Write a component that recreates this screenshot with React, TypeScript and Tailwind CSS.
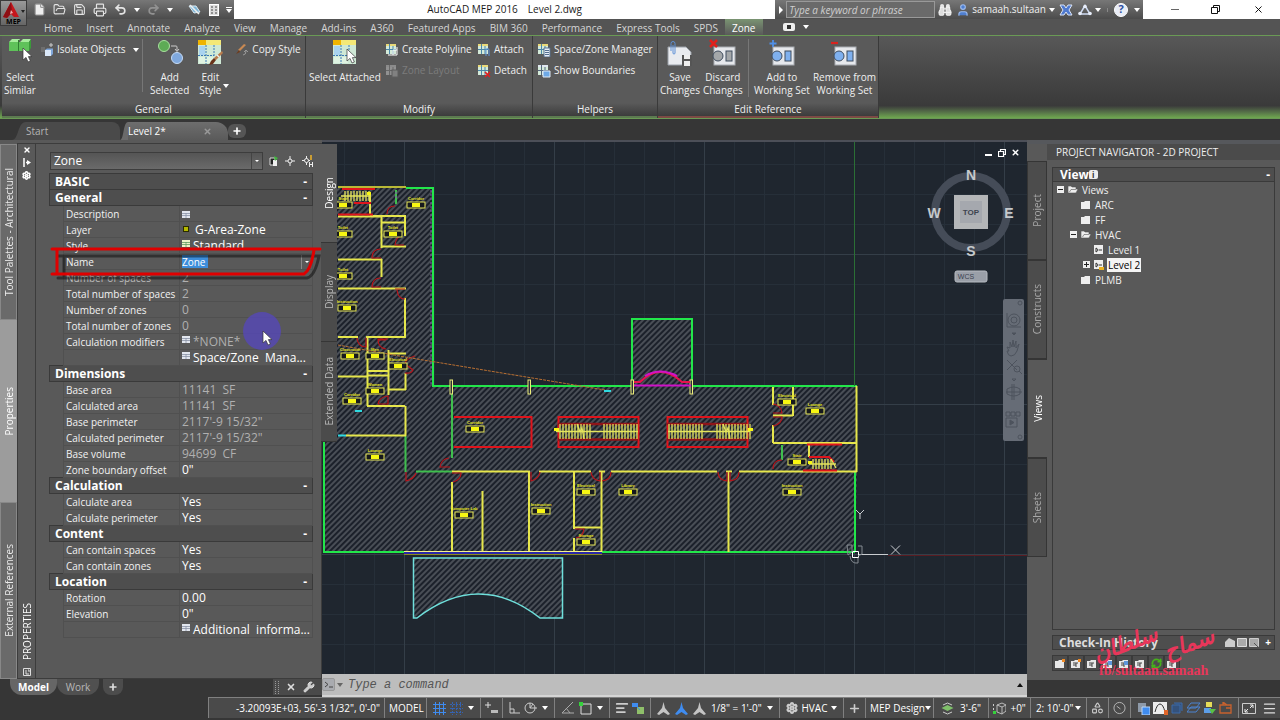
import React, { useState } from 'react';
import { clsx } from 'clsx';
import {
    AlignLeft,
    Binoculars,
    File,
    FolderOpen,
    Menu,
    Plus,
    Printer,
    Redo2,
    RefreshCw,
    Save,
    Settings,
    Shapes,
    Undo2,
    User,
    Wrench,
    X
} from 'lucide-react';

const RIBBON_TABS = [
    'Home', 'Insert', 'Annotate', 'Analyze', 'View', 'Manage', 'Add-ins', 'A360',
    'Featured Apps', 'BIM 360', 'Performance', 'Express Tools', 'SPDS', 'Zone'
];

interface PropertyRow {
    name: string;
    value: string;
    icon?: 'sheet' | 'layer' | 'style';
    muted?: boolean;
    editable?: boolean;
}

interface PropertyGroup {
    title: string;
    rows: PropertyRow[];
}

const GROUPS: PropertyGroup[] = [
    { title: 'BASIC', rows: [] },
    {
        title: 'General',
        rows: [
            { name: 'Description', value: '', icon: 'sheet' },
            { name: 'Layer', value: ' G-Area-Zone', icon: 'layer' },
            { name: 'Style', value: 'Standard', icon: 'style' },
            { name: 'Name', value: 'Zone', editable: true },
            { name: 'Number of spaces', value: '2', muted: true },
            { name: 'Total number of spaces', value: '2', muted: true },
            { name: 'Number of zones', value: '0', muted: true },
            { name: 'Total number of zones', value: '0', muted: true },
            { name: 'Calculation modifiers', value: '*NONE*', icon: 'sheet', muted: true },
            { name: '', value: 'Space/Zone  Mana...', icon: 'sheet' }
        ]
    },
    {
        title: 'Dimensions',
        rows: [
            { name: 'Base area', value: '11141  SF', muted: true },
            { name: 'Calculated area', value: '11141  SF', muted: true },
            { name: 'Base perimeter', value: '2117\'-9 15/32"', muted: true },
            { name: 'Calculated perimeter', value: '2117\'-9 15/32"', muted: true },
            { name: 'Base volume', value: '94699  CF', muted: true },
            { name: 'Zone boundary offset', value: '0"' }
        ]
    },
    {
        title: 'Calculation',
        rows: [
            { name: 'Calculate area', value: 'Yes' },
            { name: 'Calculate perimeter', value: 'Yes' }
        ]
    },
    {
        title: 'Content',
        rows: [
            { name: 'Can contain spaces', value: 'Yes' },
            { name: 'Can contain zones', value: 'Yes' }
        ]
    },
    {
        title: 'Location',
        rows: [
            { name: 'Rotation', value: '0.00' },
            { name: 'Elevation', value: '0"' },
            { name: '', value: 'Additional  informa...', icon: 'sheet' }
        ]
    }
];

const Caret = ({ className = 'text-white' }: { className?: string }) => (
    <svg width="6" height="4" viewBox="0 0 6 4" className={clsx('shrink-0', className)}>
        <path d="M0 0h6L3 4z" fill="currentColor" />
    </svg>
);

/* ---------- ribbon icons ---------- */

const Cursor = ({ x, y }: { x: number; y: number }) => (
    <path
        transform={`translate(${x} ${y})`}
        d="M0 0v12l3-2.6 2 4.6 2.4-1-2-4.4H9z"
        fill="#fff"
        stroke="#333"
        strokeWidth=".7"
    />
);

const SelectSimilarIcon = () => (
    <svg width="28" height="28" viewBox="0 0 28 28">
        <path d="M3 3l3-3h8l-2 3zM14 3l3-3h8l-2 3z" fill="#a5eb9c" />
        <path d="M3 3h9v9H3zM13 3h10v9H13z" fill="#5fc25a" />
        <path d="M23 3l2-3v9l-2 3z" fill="#3b9a3a" />
        <path d="M12.5 1v11" stroke="#2f7f31" />
        <Cursor x={17} y={9} />
    </svg>
);

const AddSelectedIcon = () => (
    <svg width="28" height="28" viewBox="0 0 28 28">
        <circle cx="8" cy="7" r="5.5" fill="#5dab55" stroke="#a9e09f" />
        <circle cx="21" cy="19" r="5.5" fill="#7fa8dd" stroke="#c6dcf7" />
        <path d="M15 7h5q1 0 1 1v4M19 10l2 2.5 2-2.5" fill="none" stroke="#ccc" />
    </svg>
);

const StyleSheetIcon = ({ cursor }: { cursor?: boolean }) => (
    <svg width="28" height="28" viewBox="0 0 28 28">
        <rect x="2" y="1" width="23" height="24" fill="#cfe9d6" />
        <rect x="2" y="1" width="23" height="5" fill="#f4e877" />
        <rect x="2" y="1" width="8" height="5" fill="#f0b400" />
        <rect x="3" y="7" width="6" height="9" fill="#a9d3ef" />
        <rect x="3" y="18" width="14" height="6" fill="#dff3e2" />
        <path d="M10 6v19M2 16.500h16M18 6v12" stroke="#3a78b5" strokeDasharray="2 1" />
        {cursor ? (
            <Cursor x={16} y={10} />
        ) : (
            <>
                <path d="M26 12l-8 7 2 2 7-7z" fill="#b97b4b" />
                <path d="M18 19l2 2-3 4-4 1 2-4z" fill="#6a3319" />
                <path d="M21 16l2 2" stroke="#eee" strokeWidth="1.500" />
            </>
        )}
    </svg>
);

const SaveChangesIcon = () => (
    <svg width="28" height="28" viewBox="0 0 28 28">
        <path d="M2 8h18l5 5v13H2z" fill="#e9ebef" stroke="#9aa0a8" />
        <path d="M5 12V4.500a2 2 0 0 1 4 0V14a1 1 0 0 1-2 0V6" fill="none" stroke="#5c8fd6" />
        <path d="M16 16h10v11H16z" fill="#555" />
        <path d="M18 16h6v4h-6zM18 22h6v5h-6z" fill="#eee" />
    </svg>
);

const ReferenceIcon = ({ kind }: { kind: 'discard' | 'add' | 'remove' }) => (
    <svg width="28" height="28" viewBox="0 0 28 28">
        <rect x="5" y="8" width="21" height="18" fill="#e6e8ec" stroke="#a7abb1" />
        <circle cx="9" cy="17" r="5" fill={kind === 'discard' ? '#a4a7a9' : '#7fb0ee'} stroke="#3f4c5e" />
        <rect x="17" y="12" width="6" height="10" fill={kind === 'discard' ? '#a4a7a9' : '#7fb0ee'} stroke="#3f4c5e" />
        {kind === 'discard' && <path d="M1 1l7 7M8 1L1 8" stroke="#e0201b" strokeWidth="2.500" />}
        {kind === 'add' && <path d="M5 1v7M1.500 4.500h7" stroke="#4f8fe6" strokeWidth="1.800" />}
        {kind === 'remove' && <path d="M1 4h7" stroke="#d8231e" strokeWidth="2.200" />}
    </svg>
);

type SmallKind = 'isolate' | 'brush' | 'polyline' | 'layout' | 'attach' | 'detach' | 'manager' | 'bounds';

const SmallIcon = ({ kind }: { kind: SmallKind }) => {
    if (kind === 'isolate') {
        return (
            <svg width="14" height="14" viewBox="0 0 14 14">
                <path d="M1 4h4v5H1z" fill="#6e6e6e" />
                <path d="M5 7l2-1.500h6V11l-2 2H5z" fill="#7fa6da" />
                <path d="M5 7h6v6H5z" fill="#dbe8f8" />
                <path d="M11 0v4M9 2h4" stroke="#ccc" />
            </svg>
        );
    }
    if (kind === 'brush') {
        return (
            <svg width="14" height="14" viewBox="0 0 14 14">
                <path d="M9 1L3 7l2 1 6-6z" fill="#c98952" />
                <path d="M4 7L1 11l4-2z" fill="#6f3b1c" />
                <path d="M8 12q3 0 3-4M9 9l2-2 2 2" stroke="#999" fill="none" />
            </svg>
        );
    }
    const dim = kind === 'layout';
    return (
        <svg width="14" height="14" viewBox="0 0 14 14" className={clsx(dim && 'opacity-40 grayscale')}>
            <rect x="1" y="1" width="10" height="10" fill="#d4ead9" />
            <rect x="1" y="1" width="10" height="2" fill={kind === 'bounds' ? '#dfe5ef' : '#e9d978'} />
            <path d="M4.500 1v10M1 6.500h10M8 3v8" stroke={kind === 'bounds' ? '#53657d' : '#4b87a8'} />
            {kind === 'polyline' && <path d="M3 12h9V4M8 12V7h4" fill="none" stroke="#fff" />}
            {kind === 'layout' && <rect x="7" y="6" width="6" height="7" fill="#bbb" stroke="#666" />}
            {kind === 'attach' && <path d="M9 13V7a1.500 1.500 0 0 1 3 0v6" fill="none" stroke="#5b93dd" />}
            {kind === 'detach' && <path d="M8 8l5 5M13 8l-5 5" stroke="#e02020" strokeWidth="1.700" />}
            {kind === 'manager' && <path d="M7 5h6v9H7zM8 7.500h4M8 9.500h4M8 11.500h4" fill="#e8eef7" stroke="#54708f" />}
            {kind === 'bounds' && <path d="M6 7h7v6H6z" fill="#6ea9e6" stroke="#dfeaf7" />}
        </svg>
    );
};

/* ---------- ribbon ---------- */

const BigButton = ({ icon, lines, caret }: { icon: React.ReactNode; lines: string[]; caret?: boolean }) => (
    <button type="button" className="flex flex-col items-center gap-1 text-center leading-[13px] whitespace-nowrap">
        {icon}
        <span className="flex flex-col">
            {lines.map((line, i) => (
                <span key={line} className="relative">
                    {line}
                    {caret && i === lines.length - 1 && <span className="absolute top-0 -right-2"><Caret /></span>}
                </span>
            ))}
        </span>
    </button>
);

const SmallButton = ({ kind, label, caret, disabled }: { kind: SmallKind; label: string; caret?: boolean; disabled?: boolean }) => (
    <button type="button" disabled={disabled} className="flex h-[21px] items-center gap-[3px] whitespace-nowrap disabled:text-[#7c7c7c]">
        <SmallIcon kind={kind} />
        {label}
        {caret && <span className="ml-1"><Caret /></span>}
    </button>
);

const Panel = ({ title, className, accent, children }: { title: string; className: string; accent?: boolean; children: React.ReactNode }) => (
    <section className={clsx('flex shrink-0 flex-col border-r border-[#3a3a3a] bg-[#5a5a5a]', className)}>
        <div className="flex flex-1 items-start pt-[3px]">{children}</div>
        <h2
            className={clsx(
                'border-b-2 bg-linear-to-b from-[#5a5a5a] to-[#3c3c3c] text-center text-[10px] leading-[13px]',
                accent ? 'border-[#7c4a44]' : 'border-[#5c7a50]'
            )}
        >
            {title}
        </h2>
    </section>
);

const Ribbon = () => (
    <div className="flex h-[84px] shrink-0 border-y border-[#6a9a55] bg-linear-to-b from-[#585858] via-[#3a3a3a] via-85% to-[#6fa84f] pl-[2px] text-[10px] text-[#f0f0f0]">
        <Panel title="General" className="w-[304px]">
            <div className="w-[38px] pl-[2px]"><BigButton icon={<SelectSimilarIcon />} lines={['Select', 'Similar']} /></div>
            <div className="w-[103px] border-r border-[#777] pb-8"><SmallButton kind="isolate" label="Isolate Objects" caret /></div>
            <div className="flex gap-[5px] pl-[7px]">
                <BigButton icon={<AddSelectedIcon />} lines={['Add', 'Selected']} />
                <div className="w-9 pl-[2px]"><BigButton icon={<StyleSheetIcon />} lines={['Edit', 'Style']} caret /></div>
                <SmallButton kind="brush" label="Copy Style" />
            </div>
        </Panel>
        <Panel title="Modify" className="w-[227px]">
            <div className="w-[79px] pl-[3px]"><BigButton icon={<StyleSheetIcon cursor />} lines={['Select Attached']} /></div>
            <div className="w-[92px]">
                <SmallButton kind="polyline" label="Create Polyline" />
                <SmallButton kind="layout" label="Zone Layout" disabled />
            </div>
            <div>
                <SmallButton kind="attach" label="Attach" />
                <SmallButton kind="detach" label="Detach" />
            </div>
        </Panel>
        <Panel title="Helpers" className="w-[125px]">
            <div className="pl-1">
                <SmallButton kind="manager" label="Space/Zone Manager" />
                <SmallButton kind="bounds" label="Show Boundaries" />
            </div>
        </Panel>
        <Panel title="Edit Reference" accent className="w-[221px]">
            <div className="flex w-[91px] gap-[3px] border-r border-[#777] pl-[2px]">
                <BigButton icon={<SaveChangesIcon />} lines={['Save', 'Changes']} />
                <BigButton icon={<ReferenceIcon kind="discard" />} lines={['Discard', 'Changes']} />
            </div>
            <div className="flex gap-[3px] pl-[5px]">
                <BigButton icon={<ReferenceIcon kind="add" />} lines={['Add to', 'Working Set']} />
                <BigButton icon={<ReferenceIcon kind="remove" />} lines={['Remove from', 'Working Set']} />
            </div>
        </Panel>
    </div>
);

const TitleBar = () => (
    <header className="flex h-[19px] shrink-0 items-stretch bg-white text-[10px]">
        <div className="flex w-[234px] items-center gap-[7px] bg-linear-to-b from-[#777] to-[#4c4c4c] pl-[33px] text-[#e4e4e4]">
            <File size={13} fill="#eee" stroke="#999" />
            <FolderOpen size={13} />
            <Save size={13} />
            <Printer size={14} />
            <Undo2 size={13} strokeWidth={3} />
            <Caret />
            <Redo2 size={13} strokeWidth={3} className="text-[#929292]" />
            <Caret />
            <svg width="14" height="12" viewBox="0 0 14 12" className="ml-2 shrink-0">
                <path d="M1 2l5 7 6-1-4-6z" fill="#7fb6d8" stroke="#dcecf5" />
                <path d="M2 1l9 9" stroke="#eee" strokeWidth="1.500" />
            </svg>
            <svg width="10" height="12" viewBox="0 0 10 12" className="shrink-0">
                <rect x=".5" y=".5" width="9" height="11" fill="#ddd" stroke="#fff" />
                <path d="M2 3h2M2 6h2M2 9h2M6 3h2M6 6h2M6 9h2" stroke="#444" />
            </svg>
            <span className="flex flex-col items-center gap-px"><span className="h-px w-[6px] bg-white" /><Caret /></span>
        </div>
        <h1 className="flex flex-1 items-center justify-center gap-[10px] whitespace-pre text-[#1a1a1a]">
            <span>AutoCAD MEP 2016</span><span>Level 2.dwg</span>
        </h1>
        <div className="flex items-center bg-linear-to-b from-[#777] to-[#4c4c4c] text-[#f0f0f0]">
            <button type="button" aria-label="Expand search" className="flex w-[11px] justify-center">
                <svg width="4" height="8" viewBox="0 0 4 8"><path d="M0 0l4 4-4 4z" fill="#fff" /></svg>
            </button>
            <input
                aria-label="Search"
                placeholder="Type a keyword or phrase"
                className="h-[17px] w-[149px] border border-[#999] bg-[#6a6a6a] px-[2px] italic outline-none placeholder:text-[#cfcfcf]"
            />
            <Binoculars size={14} className="ml-[3px]" fill="#ddd" />
            <User size={14} className="ml-1 text-[#9cbcf0]" fill="#4f7fd0" />
            <button type="button" className="ml-[2px] flex items-center gap-[3px]">samaah.sultaan <Caret /></button>
            <svg width="14" height="12" viewBox="0 0 14 12" className="ml-1">
                <path d="M1 1h4l2 3 2-3h4l-3 5 3 5H9L7 8l-2 3H1l3-5z" fill="#4f7ad0" stroke="#dbe5f8" />
            </svg>
            <svg width="14" height="12" viewBox="0 0 14 12" className="ml-[5px]">
                <path d="M7 1.500L2 10h10z" fill="none" stroke="#cfdcf3" strokeWidth="1.500" />
                <circle cx="7" cy="2.500" r="1.800" fill="#e8eefa" /><circle cx="2" cy="9.500" r="1.800" fill="#e8eefa" /><circle cx="12" cy="9.500" r="1.800" fill="#e8eefa" />
            </svg>
            <span className="ml-[3px] border-r border-[#888] pr-[6px]"><Caret /></span>
            <span className="mx-[6px] flex size-[14px] items-center justify-center rounded-full border border-white bg-[#e8ecf6] text-[11px] font-bold text-[#2a4fa0]">?</span>
            <span className="pr-[3px]"><Caret /></span>
        </div>
        <div className="flex w-[137px] items-center justify-around pl-3 text-black">
            <button type="button" aria-label="Minimize" className="h-px w-2 bg-[#666]" />
            <button type="button" aria-label="Restore">
                <svg width="9" height="9" viewBox="0 0 9 9"><path d="M.5 2.500h6v6h-6zM2.500 2.500v-2h6v6h-2" fill="none" stroke="#111" /></svg>
            </button>
            <button type="button" aria-label="Close"><X size={11} /></button>
        </div>
    </header>
);

const RibbonTabs = () => (
    <nav className="flex h-[16px] shrink-0 items-stretch bg-[#545454] pl-[37px] text-[10px] leading-[18px] text-[#d6d6d6]">
        {RIBBON_TABS.map((tab) => (
            <button
                key={tab}
                type="button"
                className={clsx(
                    'px-[7px] whitespace-nowrap',
                    tab === 'Zone' && 'bg-linear-to-b from-[#7a9472] to-[#5a5a5a] text-white'
                )}
            >
                {tab}
            </button>
        ))}
        <span className="flex items-center gap-2 pl-5">
            <span className="flex h-2 w-3 items-center justify-center rounded-xs bg-[#eee]">
                <span className="size-1 bg-[#333]" />
            </span>
            <Caret />
        </span>
    </nav>
);

const AppButton = () => (
    <button
        type="button"
        aria-label="Application menu"
        className="absolute top-0 left-0 flex h-[26px] w-[27px] flex-col items-center border border-[#3b3b3b] bg-linear-to-b from-[#999] to-[#666]"
    >
        <svg width="24" height="18" viewBox="0 0 24 18">
            <path d="M9 1L1 16l4 1 4-4 3 3h5z" fill="#c5161c" />
            <path d="M9 1l1 10-5 6-4-1z" fill="#8d0f14" />
            <path d="M9 9l-1 4 3-1z" fill="#f0b0b0" />
            <path d="M19 9h4l-2 3z" fill="#222" />
        </svg>
        <span className="text-[7px] leading-[6px] font-bold text-black">MEP</span>
    </button>
);

const tabShape = 'M0 16C8 16 6 0 16 0';

const FileTabs = () => (
    <div className="flex h-[21px] shrink-0 items-end bg-[#363636] pl-3 text-[10px]">
        <button type="button" className="flex h-[18px] w-[108px] items-center text-[#b4b4b4]">
            <svg width="14" height="18" viewBox="0 0 16 16" preserveAspectRatio="none"><path d={`${tabShape}V16z`} fill="#4a4a4a" /></svg>
            <span className="flex h-full flex-1 items-center rounded-tr-lg bg-[#4a4a4a]">Start</span>
        </button>
        <button type="button" className="flex h-[18px] w-[108px] items-center text-white">
            <svg width="8" height="18" viewBox="0 0 16 16" preserveAspectRatio="none"><path d={`${tabShape}V16z`} fill="#6a6a6a" /></svg>
            <span className="flex h-full flex-1 items-center justify-between rounded-tr-xl bg-linear-to-b from-[#6e6e6e] to-[#5a5a5a] pr-4">
                Level 2* <X size={9} strokeWidth={4} className="text-[#999]" />
            </span>
        </button>
        <button type="button" aria-label="New tab" className="mb-[2px] flex h-[14px] w-[18px] items-center justify-center rounded-md bg-[#555] text-white">
            <Plus size={10} strokeWidth={4} />
        </button>
    </div>
);

/* ---------- properties palette ---------- */

const PropIcon = ({ kind }: { kind: 'sheet' | 'layer' | 'style' }) => {
    if (kind === 'layer') {
        return <span className="mt-1 ml-px size-[6px] shrink-0 border border-[#2c2c00] bg-[#b5b800]" />;
    }
    return (
        <svg width="8" height="8" viewBox="0 0 8 8" className="mt-[2px] shrink-0">
            <rect width="8" height="7" fill={kind === 'style' ? '#eef3c8' : '#e2e6ee'} />
            <path d="M0 2.500h8M4 2v5M0 4.500h8" stroke={kind === 'style' ? '#5f9c60' : '#8a93a6'} strokeWidth=".8" />
        </svg>
    );
};

const PropertyTable = () => (
    <table className="w-[264px] table-fixed border-collapse text-[10px] leading-[14px] text-[#f2f2f2]">
        <colgroup>
            <col className="w-[14px]" />
            <col className="w-[116px]" />
            <col />
        </colgroup>
        <tbody>
            {GROUPS.map((group) => (
                <React.Fragment key={group.title}>
                    <tr className="h-4">
                        <th colSpan={3} className="border border-[#3a3a3a] bg-[#4e4e4e] p-0 pl-[5px] text-left text-[12px] leading-[15px] font-bold text-white">
                            <span className="flex justify-between pr-[5px]">{group.title}<span>-</span></span>
                        </th>
                    </tr>
                    {group.rows.map((row) => (
                        <tr key={row.name + row.value} className="h-4">
                            <td className="p-0" />
                            <td className={clsx('border border-[#505050] p-0 pl-[2px]', row.name === 'Number of spaces' && 'text-[#bdbdbd]')}>
                                {row.editable ? <label htmlFor="zone-name">{row.name}</label> : row.name}
                            </td>
                            <td className="border border-[#505050] p-0 pl-[2px]">
                                {row.editable ? (
                                    <span className="flex h-[14px] items-center justify-between">
                                        <input id="zone-name" defaultValue={row.value} className="h-[13px] w-[26px] bg-[#3d8edb] text-[10px] text-white outline-none" />
                                        <button type="button" aria-label="Choose name" className="flex h-[14px] w-[11px] items-center justify-center border-l border-[#888]">
                                            <svg width="4" height="2"><path d="M0 0h4L2 2z" fill="#fff" /></svg>
                                        </button>
                                    </span>
                                ) : (
                                    <span
                                        className={clsx(
                                            'flex gap-[3px] text-[12px] leading-[15px] whitespace-pre',
                                            row.muted ? 'text-[#b0b0b0]' : 'text-white'
                                        )}
                                    >
                                        {row.icon && <PropIcon kind={row.icon} />}
                                        {row.value}
                                    </span>
                                )}
                            </td>
                        </tr>
                    ))}
                </React.Fragment>
            ))}
        </tbody>
    </table>
);

const PropertiesPalette = () => (
    <aside className="relative flex min-h-0 flex-1 border border-[#3c3c3c] bg-[#595959]">
        <div className="flex w-[18px] flex-col items-center gap-[4px] border-r border-[#3c3c3c] py-[2px] text-white">
            <X size={8} strokeWidth={4} />
            <svg width="8" height="9" viewBox="0 0 8 9"><path d="M1 0v9M3 4.500h3" stroke="#fff" strokeWidth="1.500" /><path d="M4 2l4 2.500L4 7z" fill="#fff" /></svg>
            <Settings size={9} strokeWidth={4} />
            <span className="mt-auto rotate-180 text-[10px] leading-[12px] [writing-mode:vertical-rl]">PROPERTIES</span>
            <svg width="8" height="8" viewBox="0 0 8 8" className="mt-1"><path d="M.5.5h7v7h-7zM3 2v4h3M5 2h1v2" fill="none" stroke="#ddd" /></svg>
        </div>
        <div className="flex-1 pt-2 pl-[14px]">
            <div className="flex h-[18px] items-center">
                <select aria-label="Selected object" className="h-[18px] w-[213px] appearance-none border border-[#3d3d3d] bg-linear-to-b from-[#555] to-[#6a6a6a] px-[3px] text-[12px] leading-none text-white">
                    <option>Zone</option>
                </select>
                <span className="-ml-3 flex h-[16px] w-[11px] items-center justify-center border-l border-[#444]">
                    <svg width="4" height="2"><path d="M0 0h4L2 2z" fill="#fff" /></svg>
                </span>
                <svg width="10" height="12" viewBox="0 0 10 12" className="ml-[7px]">
                    <path d="M1 3h5v7H1z" fill="#222" stroke="#ddd" /><path d="M4 5h4v6H4z" fill="#eee" /><path d="M5 1l4 2-3 3z" fill="#41b53f" />
                </svg>
                <svg width="10" height="10" viewBox="0 0 10 10" className="ml-[6px]"><path d="M5 0v10M0 5h10" stroke="#eee" /><circle cx="5" cy="5" r="2" fill="#595959" stroke="#eee" /></svg>
                <svg width="12" height="12" viewBox="0 0 12 12" className="ml-[7px]">
                    <path d="M4.500 1v9M0 5.500h8" stroke="#eee" /><circle cx="4.500" cy="5.500" r="2" fill="#595959" stroke="#eee" />
                    <path d="M9 0v5" stroke="#f0b429" strokeWidth="1.500" /><path d="M7.500 7v5M10.500 7v5M7 9.500h4" stroke="#eee" />
                </svg>
            </div>
            <div className="-ml-px pt-[3px]"><PropertyTable /></div>
        </div>

        {/* tabs hang over the drawing */}
        <div className="absolute top-0 left-full z-10 flex w-[16px] flex-col text-[10px] leading-[14px]">
            {[
                ['Design', 'h-[99px] bg-[#595959] text-white'],
                ['Display', 'h-[99px] bg-[#4b4b4b] text-[#b8b8b8]'],
                ['Extended Data', 'h-[100px] bg-[#4b4b4b] text-[#b8b8b8]']
            ].map(([label, look]) => (
                <button key={label} type="button" className={clsx('flex items-center justify-center border-b border-[#363636]', look)}>
                    <span className="rotate-180 whitespace-nowrap [writing-mode:vertical-rl]">{label}</span>
                </button>
            ))}
        </div>

        {/* marker drawn round the Name row */}
        <svg width="280" height="46" viewBox="0 0 280 46" className="pointer-events-none absolute top-[98px] left-[32px] z-20 overflow-visible">
            <g fill="none" strokeWidth="3" strokeLinecap="round">
                <path d="M5 10h261q-4 20-12 22H5M11 10v22" stroke="#000" opacity=".45" transform="translate(3 4)" />
                <path d="M2 7h268M264 8q-3 20-10 24M2 32h252M7 8v23" stroke="#e00000" />
            </g>
        </svg>
        <svg width="38" height="38" viewBox="0 0 38 38" className="pointer-events-none absolute top-[168px] left-[225px] z-20">
            <circle cx="19" cy="19" r="19" fill="#5547b8" opacity=".8" />
            <Cursor x={20} y={19} />
        </svg>
    </aside>
);

const DockStrip = () => (
    <div className="flex w-[17px] shrink-0 flex-col bg-[#595959] pt-[4px] text-[10px] leading-[14px]">
        {[
            ['Tool Palettes - Architectural', 'h-[176px] border border-[#888] bg-[#6a6a6a] text-[#ececec]'],
            ['Properties', 'flex-1 bg-[#9c9c9c] text-white'],
            ['External References', 'h-[177px] border border-[#888] bg-[#6a6a6a] text-[#ececec]']
        ].map(([label, look]) => (
            <button key={label} type="button" className={clsx('flex w-[17px] items-center justify-center', look)}>
                <span className="rotate-180 whitespace-nowrap [writing-mode:vertical-rl]">{label}</span>
            </button>
        ))}
    </div>
);

/* ---------- drawing ---------- */

const TAGS: [number, number, string][] = [
    [416, 205, 'Corridor'], [343, 205, 'Stair'], [393, 234, 'Toilet'], [343, 234, 'Toilet'], [343, 276, 'Toilet'],
    [347, 308, 'Instruction'], [350, 356, 'Classroom'], [375, 356, 'Men'], [398, 366, 'Electrical'], [375, 391, 'Women'],
    [352, 401, 'Corridor'], [375, 457, 'Lounge'], [475, 429, 'Corridor'], [464, 515, 'Computer Lab'], [541, 511, 'Instruction'],
    [586, 492, 'Electrical'], [586, 542, 'Storage'], [628, 492, 'Library'], [792, 492, 'Instruction'],
    [787, 402, 'Electrical'], [815, 411, 'Lounge'], [797, 462, 'Stair']
];

const range = (from: number, to: number, step: number) => {
    const out: number[] = [];
    for (let v = from; v <= to; v += step) out.push(v);
    return out;
};

const treads = (from: number, to: number, top: number, bottom: number) =>
    range(from, to, 3).map((x) => `M${x} ${top}V${bottom}`).join('');

const FloorPlan = () => (
    <svg className="absolute inset-0 size-full" viewBox="322 142 705 532" preserveAspectRatio="xMinYMin slice">
        <defs>
            <pattern id="hatch" width="4" height="4" patternUnits="userSpaceOnUse" patternTransform="rotate(45)">
                <rect width="4" height="4" fill="#1b202a" />
                <path d="M1 0v4" stroke="#777c82" />
            </pattern>
            <pattern id="minor" x="404" y="254" width="30" height="30" patternUnits="userSpaceOnUse">
                <path d="M.5 0v30M0 .5h30" stroke="#262f39" fill="none" />
            </pattern>
            <pattern id="major" x="404" y="254" width="150" height="150" patternUnits="userSpaceOnUse">
                <path d="M.5 0v150M0 .5h150" stroke="#343e48" fill="none" />
            </pattern>
        </defs>
        <rect x="322" y="142" width="1400" height="1000" fill="url(#minor)" />
        <rect x="322" y="142" width="1400" height="1000" fill="url(#major)" />

        <path d="M324 188h109v198h424v86l-2 80H324z" fill="url(#hatch)" />
        <path d="M632 319h60v67h-60z" fill="url(#hatch)" />
        <path d="M413.500 558h149v60H540q-61-48-123 0h-3.500z" fill="url(#hatch)" stroke="#6fe0dc" strokeWidth="1.500" />

        {/* outline */}
        <g fill="none" stroke="#22e64a" strokeWidth="2">
            <path d="M406 188h27v198h199M692 386h165M855 472v80M601 552h254M324 442v110h80" />
            <path d="M632 384v-65h60v65" />
            <path d="M405.500 436v36M416 471.500h36M452 394v64M782 445v15M396 190v14" stroke="#3fbf4e" />
        </g>
        <path d="M431 190v194M396 192v8" stroke="#8a4fb0" strokeDasharray="2 2" />
        <path d="M854.500 142v244" stroke="#2b6f35" />

        {/* walls */}
        <g fill="none" stroke="#e6e64c" strokeWidth="2">
            <path d="M338 187h68M370 195v20M370 216h36M338 216.500h43" />
            <path d="M381.500 217v31M382 222.500h23M405 216v20M382 246.500h24M338 259.500h44M381.500 259v18M338 288.500h68" />
            <path d="M405 298v39M366 337h40M338 337h20M367.500 337v69M388.500 350v45M368 371h21M368 375.500h21M338 376.500h29" />
            <path d="M389 353.500h17M389 389.500h17M405.500 373v17M367 406h38M405.500 406v30M346 435.500h60" />
            <path d="M452 471.500h78M539 471.500h52M599 471.500h6M611 471.500h106M726 471.500h6M739 471.500h118" />
            <path d="M452 482v70M482.500 491v61M529 472v80M574 472v57M574 538v14M601.500 472v80M574 527.500h27M728.500 472v80" />
            <path d="M773 387v18M773 425v18M773 415.500h20M793 387v29M773 443h83M856.500 386v86M809 445v12" />
        </g>
        <path d="M338 187h68M404 554.500h198" stroke="#8a8a20" />
        <path d="M404 551.500h198" stroke="#f5f58a" />
        <path d="M404 553h198" stroke="#2a27a8" strokeWidth="2" />
        <g fill="#2a2f36" stroke="#ecec7a">
            <rect x="450" y="380" width="2.500" height="14" />
            <rect x="528" y="380" width="2.500" height="14" />
            <rect x="631" y="380" width="2.500" height="14" />
            <rect x="690" y="380" width="2.500" height="14" />
        </g>

        {/* voids and stairs */}
        <g fill="none" stroke="#e0141c" strokeWidth="2">
            <path d="M454 417h77.500v30H454" />
            <path d="M558.500 417h80v30h-80zM667.500 417h80v30h-80z" />
            <path d="M342 189h33M354 203h17M338 214.500h35M807 444.500h35M809 457h20l5 5M803 470.500h34" />
        </g>
        <path d="M558 424h80M558 439.500h80M667 424h80M667 439.500h80" stroke="#8f1519" strokeWidth="2.500" />
        <g stroke="#e4e45c" fill="none" strokeWidth="1.300">
            <path d={treads(560, 590, 424, 439) + treads(604, 638, 424, 439)} />
            <path d={treads(669, 702, 424, 439) + treads(717, 750, 424, 439)} />
            <path d={treads(345, 369, 191, 201) + treads(813, 831, 459, 469)} />
            <path d="M556 431.500h82M668 431.500h82M341 196h29M809 464h27M577 424l3 8 2-4 2 11M723 424l3 8 2-4 2 11M831 459l5 9" />
        </g>
        <path d="M554 428h5v3h-5zM748 428h5v3h-5zM367 192h4v3h-4zM808 461h4v3h-4z" fill="#f7f712" />

        {/* entrance */}
        <path d="M634 382h6q20-20 42 0h8" fill="none" stroke="#e8124e" strokeWidth="2" />
        <path d="M645 376q15-9 32 0M634 385.500h57" fill="none" stroke="#d012c8" strokeWidth="2" />

        {/* doors */}
        <g fill="none" stroke="#b8141b" strokeWidth="1.200">
            <path d="M387 214q0-8 8-8M404 245h-9q1-8 6-9M381 258h-9q0-9 9-9M381 287h-9q0-9 9-9M395 289h10M397 290q1 9 8 9" />
            <path d="M357 338q1 9 9 9v-9M388 339h-10q0 9 8 10M415 356q-10 3-10 8l8 6q-2 4-8 3M378 404h10v-8q-9 1-10 8M378 340h8" />
            <path d="M406 472v9q8-2 10-8M450 467h-10q1-8 9-9M452 473h9q0 7-8 9M531 472v9q8-2 9-9M600 472v9q-8-1-9-9M602 481q9-1 9-9M575 529h9q-1 8-8 9" />
            <path d="M727 472v9q-9-1-9-9M730 472v9q9-1 9-9M773 413h9q-1-8-9-9M773 417h9q0 7-9 9M773 469q0-9 9-9" />
        </g>
        <path d="M338 345l67 12 200 33" fill="none" stroke="#b86f32" strokeDasharray="3 1" />
        <path d="M604 391h7M355 411h7M338 435.500h8" stroke="#2fd9e0" strokeWidth="2" />

        {/* room tags */}
        {TAGS.map(([x, y, label]) => (
            <g key={`${x}-${y}`}>
                <rect x={x - 9} y={y - 3} width="18" height="6" fill="#16191d" stroke="#e8e85a" />
                <rect x={x - 4} y={y - 2} width="8" height="4" fill="#f7f712" />
                <text x={x} y={y - 5} textAnchor="middle" fontSize="4" fontWeight="bold" fill="#e6e620" fontFamily="Liberation Sans, sans-serif">
                    {label}
                </text>
            </g>
        ))}

        {/* UCS marker */}
        <path d="M888 555.500h900" stroke="#5a1c22" />
        <g fill="none" stroke="#c9ccd0">
            <path d="M858 554.500h30" />
            <path d="M891 545.500l9 9M900 545.500l-9 9M856 510l4 4 4-4M860 514v5" />
            <path d="M852.500 551.500h6v6h-6z" stroke="#fff" />
            <path d="M847 545h5v7l-4 3zM858 546h4v8l-4 2M850 556q1 8 8 7v-5" stroke="#858b92" />
        </g>
    </svg>
);

const ViewCube = () => (
    <svg width="92" height="120" viewBox="925 166 92 120" className="absolute top-[24px] right-[10px]" fontFamily="Liberation Sans, sans-serif" fontWeight="bold">
        <circle cx="971" cy="212" r="36" fill="none" stroke="#454c58" strokeWidth="8" />
        <rect x="954" y="195" width="34" height="34" fill="#b4b6b8" />
        <rect x="960" y="201" width="22" height="22" fill="#a5a8ae" />
        <text x="971" y="215" textAnchor="middle" fontSize="8" fill="#3d4450">TOP</text>
        <g fill="#c6c9cc" fontSize="14" textAnchor="middle">
            <text x="971" y="180">N</text>
            <text x="971" y="256">S</text>
            <text x="934" y="218">W</text>
            <text x="1009" y="218">E</text>
        </g>
        <rect x="955" y="271" width="32" height="11" rx="2" fill="#9a9fa8" stroke="#b7bbc2" />
        <text x="966" y="279" textAnchor="middle" fontSize="7" fontWeight="normal" fill="#3a4250">WCS</text>
    </svg>
);

const NavBar = () => (
    <div className="absolute top-[157px] right-[3px] rounded-xs bg-[#666c76]">
        <svg width="21" height="142" viewBox="0 0 21 142" fill="none" stroke="#4d535d">
            <circle cx="17" cy="4" r="2" />
            <circle cx="11" cy="21" r="6" /><circle cx="11" cy="21" r="3" /><path d="M4 14v14h14" />
            <path d="M9 34h4l-2 2z" fill="#4d535d" />
            <path d="M6 52l-2-4 3 1v-6l2 5 1-7 1 7 2-6v7l3-4-2 7q-2 5-6 5-3 0-4-5z" />
            <path d="M4 61l10 10M14 61L4 71" /><circle cx="14" cy="70" r="3" /><path d="M16 72l3 3M9 80h4l-2 2z" />
            <path d="M11 85v16M9 85v16M3 93h16M4 90q7-4 13 0v5q-6 4-13 0z" />
            <path d="M3 113h4v4H3zM8 113h4v4H8zM13 113h4v4h-4zM3 119h11v9H3z" /><path d="M7 121l4 2.500-4 2.500z" fill="#4d535d" />
            <circle cx="17" cy="138" r="2" />
        </svg>
    </div>
);

const Canvas = () => (
    <div className="relative min-h-0 flex-1 overflow-hidden border-t-2 border-[#4c4f58] bg-[#1f262f]">
        <FloorPlan />
        <div className="absolute top-[6px] right-[7px] flex items-center gap-[5px] text-white">
            <svg width="8" height="8"><path d="M0 6h7" stroke="#fff" strokeWidth="2" /></svg>
            <svg width="8" height="8" viewBox="0 0 8 8"><path d="M.5 2.500h5v5h-5zM2.500 2V.5h5v5H6" fill="none" stroke="#fff" strokeWidth="1.200" /></svg>
            <X size={9} strokeWidth={4} />
        </div>
        <ViewCube />
        <NavBar />
    </div>
);

const CommandLine = () => (
    <div className="flex h-[23px] shrink-0 items-center border-b-2 border-[#d5d5d5] bg-[#bdbdbd] pr-1">
        <span className="flex h-[13px] w-[13px] items-center justify-center rounded-xs border border-[#999] bg-[#a9abb0]">
            <svg width="9" height="7" viewBox="0 0 9 7"><path d="M1 1l3 2.500L1 6M5 6h4" fill="none" stroke="#444" /></svg>
        </span>
        <Caret className="mx-[2px] text-[#666]" />
        <input
            aria-label="Command"
            placeholder="Type a command"
            className="min-w-0 flex-1 bg-transparent pl-[3px] font-['Liberation_Mono',monospace] text-[12px] italic outline-none placeholder:text-[#555]"
        />
        <svg width="6" height="4" viewBox="0 0 6 4"><path d="M0 4h6L3 0z" fill="#111" /></svg>
    </div>
);

const LayoutTabs = () => (
    <div className="flex h-[18px] shrink-0 items-start bg-[#363636] pl-[10px] text-[10px] leading-4">
        <button type="button" className="h-4 w-[47px] rounded-b-xl bg-[#666] font-bold text-white">Model</button>
        <button type="button" className="h-4 w-[42px] rounded-b-xl bg-[#505050] text-[#b8b8b8]">Work</button>
        <button type="button" aria-label="New layout" className="ml-1 flex h-4 w-[20px] items-center justify-center rounded-b-lg bg-[#4c4c4c] text-[#ddd]">
            <Plus size={10} strokeWidth={4} />
        </button>
        <div className="ml-auto flex h-[16px] w-[49px] items-center gap-[7px] bg-[#4a4a4a] pl-[2px] text-[#ddd]">
            <svg width="4" height="13"><path d="M.5 0v13M3.500 0v13" stroke="#999" strokeDasharray="1 1" /></svg>
            <X size={10} strokeWidth={4} />
            <Wrench size={12} fill="#ccc" />
        </div>
    </div>
);

/* ---------- project navigator ---------- */

const Folder = ({ open }: { open?: boolean }) => (
    <svg width="10" height="8" viewBox="0 0 10 8" className="shrink-0">
        {open ? <path d="M0 0h3l1 1h4v2h2L8 7H0zM1.500 6L3 3.500h5" fill="#eee" stroke="#555" strokeWidth=".6" /> : <path d="M0 1h3l1-1h5v8H0z" fill="#eee" />}
    </svg>
);

const SheetIcon = ({ locked }: { locked?: boolean }) => (
    <svg width="10" height="10" viewBox="0 0 10 10" className="shrink-0">
        <rect width="9" height="9" fill="#eee" />
        <path d="M2 3v4q4-2 0-4M5 5h3" fill="none" stroke="#333" />
        {locked && <path d="M5 7h5v3H5z" fill="#e8b020" />}
    </svg>
);

const Toggle = ({ open }: { open: boolean }) => (
    <span className="flex size-[7px] shrink-0 items-center justify-center bg-[#eee]">
        <svg width="5" height="5"><path d={open ? 'M0 2.500h5' : 'M0 2.500h5M2.500 0v5'} stroke="#222" /></svg>
    </span>
);

const TREE = [
    { label: 'Views', pad: 'pl-1', toggle: 'open', icon: <Folder open /> },
    { label: 'ARC', pad: 'pl-7', icon: <Folder /> },
    { label: 'FF', pad: 'pl-7', icon: <Folder /> },
    { label: 'HVAC', pad: 'pl-[17px]', toggle: 'open', icon: <Folder open /> },
    { label: 'Level 1', pad: 'pl-[41px]', icon: <SheetIcon /> },
    { label: 'Level 2', pad: 'pl-[30px]', toggle: 'closed', icon: <SheetIcon locked /> },
    { label: 'PLMB', pad: 'pl-7', icon: <Folder /> }
];

const ProjectNavigator = () => {
    const [selected, setSelected] = useState('Level 2');

    return (
        <aside className="relative flex w-[253px] shrink-0 flex-col bg-[#363636] pb-[17px]">
            <div className="flex min-h-0 flex-1 border-t-4 border-[#56585c] bg-[#595959]">
                <div className="flex w-[20px] shrink-0 flex-col pt-[17px] text-[10px] leading-[14px]">
                    {['Project', 'Constructs', 'Views', 'Sheets'].map((label) => (
                        <button
                            key={label}
                            type="button"
                            className={clsx(
                                'flex h-[99px] items-center justify-center border border-[#353535]',
                                label === 'Views' ? 'border-r-0 bg-[#595959] text-white' : 'bg-[#4c4c4c] text-[#a8a8a8]'
                            )}
                        >
                            <span className="rotate-180 [writing-mode:vertical-rl]">{label}</span>
                        </button>
                    ))}
                </div>
                <div className="flex min-w-0 flex-1 flex-col">
                    <h2 className="bg-[#4b4b4b] pl-[9px] text-[10px] leading-4 text-[#eee]">PROJECT NAVIGATOR - 2D PROJECT</h2>
                    <div className="mt-[7px] mr-[5px] ml-[5px] flex min-h-0 flex-1 flex-col border border-[#3a3a3a]">
                        <h3 className="flex h-[14px] items-center border-b border-[#3a3a3a] bg-[#4e4e4e] pr-1 pl-[7px] text-[12px] font-bold text-white">
                            Views
                            <span className="-ml-[6px] flex size-[9px] items-center justify-center rounded-xs bg-[#eee] text-[8px] text-[#333]">i</span>
                            <span className="ml-auto">-</span>
                        </h3>
                        <ul className="text-[#f0f0f0]">
                            {TREE.map((node) => (
                                <li key={node.label} className={clsx('flex h-[15px] items-center gap-[3px]', node.pad)}>
                                    {node.toggle && <span className="pr-px"><Toggle open={node.toggle === 'open'} /></span>}
                                    {node.icon}
                                    <button
                                        type="button"
                                        onClick={() => setSelected(node.label)}
                                        className={clsx('px-px text-[10px] leading-[14px]', selected === node.label && 'bg-[#f4f4f4] text-black')}
                                    >
                                        {node.label}
                                    </button>
                                </li>
                            ))}
                        </ul>
                    </div>
                    <div className="mt-[5px] mr-[5px] ml-[5px] flex h-[15px] items-center border border-[#3a3a3a] bg-[#4e4e4e] pr-[3px] pl-[6px] text-[12px] font-bold text-[#ddd]">
                        Check-In History
                        <span className="ml-auto flex items-center gap-[2px]">
                            <svg width="10" height="9"><path d="M0 4l4-4 6 3v6H0z" fill="#ccc" /></svg>
                            <svg width="10" height="9"><path d="M.5.5h9v8h-9z" fill="#aaa" stroke="#ddd" /></svg>
                            <svg width="10" height="9"><path d="M.5.5h9v8h-9z" fill="#aaa" stroke="#ccc" /><path d="M5 5l4 4" stroke="#555" /></svg>
                            <span className="ml-1 text-[10px] text-white">+</span>
                        </span>
                    </div>
                    <div className="mt-[5px] mb-[9px] ml-[5px] flex">
                        {range(0, 7, 1).map((i) => (
                            <button key={i} type="button" aria-label={`Tool ${i + 1}`} className="flex h-4 w-4 items-center justify-center border border-[#3a3a3a] bg-[#4c4c4c]">
                                {i === 6 ? (
                                    <RefreshCw size={11} strokeWidth={4} className="text-[#47b01c]" />
                                ) : (
                                    <svg width="10" height="9" viewBox="0 0 10 9">
                                        <path d="M0 2h3l1-1h5v8H0z" fill="#e8e8e8" />
                                        {i < 2 && <path d="M7 0h3v3H7z" fill="#f08a24" />}
                                        {i > 0 && <path d="M2 4h5M2 6h3M5 4v4" stroke="#444" />}
                                        {(i === 3 || i === 4) && <path d="M5 2h4v4H5z" fill="#5e96dc" />}
                                    </svg>
                                )}
                            </button>
                        ))}
                    </div>
                </div>
            </div>

            {/* channel watermark */}
            <div className="pointer-events-none absolute right-[65px] bottom-[17px] flex flex-col items-center text-[#e8365a]">
                <div dir="rtl" className="flex items-center gap-1 font-['DejaVu_Sans',sans-serif] text-[22px] leading-[36px] font-bold italic">
                    <span className="-rotate-[20deg]">سماح</span>
                    <span className="-rotate-[20deg]">سلطان</span>
                </div>
                <span className="font-['Liberation_Serif',serif] text-[14px] leading-[18px] font-bold">fb/sultaan.samaah</span>
            </div>
        </aside>
    );
};

/* ---------- status bar ---------- */

const Cell = ({ className, children }: { className?: string; children: React.ReactNode }) => (
    <div className={clsx('flex h-full shrink-0 items-center justify-around border-r border-[#808080] px-1', className)}>{children}</div>
);

const GridIcon = ({ dim }: { dim?: boolean }) => (
    <svg width="13" height="13" viewBox="0 0 13 13">
        <path d="M2.500 0v13M6.500 0v13M10.500 0v13M0 2.500h13M0 6.500h13M0 10.500h13" stroke={dim ? '#3563b0' : '#3f8cf0'} strokeDasharray={dim ? '2 1' : undefined} />
    </svg>
);

const Figure = ({ color }: { color: string }) => (
    <svg width="13" height="13" viewBox="0 0 13 13">
        <path d="M6.500 0l1.500 6 5 6-2 1-4.500-3L2 13l-2-1 5-6z" fill={color} />
    </svg>
);

const StatusBar = () => (
    <footer className="flex h-[23px] shrink-0 justify-end bg-[#363636] text-[10px] whitespace-nowrap text-white">
        <div className="flex h-[21px] items-center overflow-hidden border-t border-l border-[#808080] bg-[#4a4a4a]">
            <Cell className="w-[176px] justify-end pl-0"><span>-3.20093E+03, 56'-3 1/32", 0'-0"</span></Cell>
            <Cell className="w-[42px]">MODEL</Cell>
            <Cell className="w-[54px]"><GridIcon /><GridIcon dim /><Caret /></Cell>
            <Cell className="w-[22px]">
                <svg width="13" height="12" viewBox="0 0 13 12"><path d="M3 0v6M0 3h6" stroke="#ddd" /><path d="M6 8h7v3H6z" fill="#bbb" /></svg>
            </Cell>
            <Cell className="w-[52px]">
                <svg width="11" height="12" viewBox="0 0 11 12"><path d="M1 0v11h10M1 7h4v4" fill="none" stroke="#ccc" /></svg>
                <svg width="13" height="12" viewBox="0 0 13 12"><circle cx="6" cy="6" r="5" fill="none" stroke="#ccc" /><path d="M6 6h7M6 6l3-4M6 1v5" stroke="#ccc" /></svg>
                <Caret />
            </Cell>
            <Cell className="w-[55px]">
                <svg width="13" height="12" viewBox="0 0 13 12"><path d="M12 0L1 11h12M5 6l4 5" fill="none" stroke="#aaa" /></svg>
                <svg width="13" height="13" viewBox="0 0 13 13"><path d="M2 2h10v10H2z" fill="none" stroke="#ddd" /><path d="M0 0h4v4H0z" fill="#35d23c" /></svg>
                <Caret />
            </Cell>
            <Cell className="w-[41px]">
                <AlignLeft size={14} strokeWidth={3} className="text-[#ccc]" />
                <svg width="13" height="13" viewBox="0 0 13 13"><path d="M0 1h6v4H0z" fill="#3f8cf0" /><path d="M5 5h7v7H5z" fill="#8fbf6a" /><path d="M3 3l5 5" stroke="#3f8cf0" /></svg>
            </Cell>
            <Cell className="w-[129px]">
                <Figure color="#c4c4c4" /><Figure color="#3f8cf0" /><Figure color="#c4c4c4" /><span>1/8" = 1'-0"</span><Caret />
            </Cell>
            <Cell className="w-[64px]"><Settings size={12} strokeWidth={4} className="text-[#ccc]" /><span>HVAC</span><Caret /></Cell>
            <Cell className="w-[22px]"><Plus size={15} strokeWidth={3} className="text-[#ccc]" /></Cell>
            <Cell className="w-[68px] px-0"><span>MEP Design</span><Caret /></Cell>
            <Cell className="w-[55px]">
                <svg width="13" height="13" viewBox="0 0 13 13"><path d="M6.500 3l6 3-6 3-6-3z" fill="#7fc06a" /><path d="M2 3l4.500-2L11 3M2 10l4.500 2 4.500-2" fill="none" stroke="#ccc" /></svg>
                <span>3'-6"</span>
            </Cell>
            <Cell className="w-[42px] px-[2px]">
                <svg width="13" height="13" viewBox="0 0 13 13"><path d="M4 3l5-2 4 2v6l-4 3-5-2zM4 3l5 2v7M9 5l4-2" fill="none" stroke="#bbb" /><path d="M0 2h1v2H0zM0 6h1v2H0z" fill="#ccc" /><path d="M0 9h3v3H0z" fill="#35d23c" /></svg>
                <span>+0"</span>
            </Cell>
            <Cell className="w-[56px]"><span>2: 10'-0"</span><Caret /></Cell>
            <Cell className="w-[22px]"><Shapes size={14} strokeWidth={2} className="text-[#ccc]" /></Cell>
            <Cell className="w-[22px]">
                <svg width="14" height="14" viewBox="0 0 14 14"><circle cx="7" cy="7" r="6" fill="none" stroke="#bbb" /><path d="M4 5l4 3" stroke="#bbb" /></svg>
            </Cell>
            <Cell className="w-[108px]">
                <svg width="13" height="13" viewBox="0 0 13 13"><path d="M1 1h8v9H1z" fill="#8d99a8" /><path d="M5 5h8v8H5z" fill="#3f8cf0" stroke="#bcd5f5" /></svg>
                <svg width="15" height="13" viewBox="0 0 15 13"><path d="M0 0h14v12H0z" fill="#eee" /><path d="M2 10Q4 2 7 2t5 8" fill="none" stroke="#333" /><path d="M11 8h4v5h-4z" fill="#e0662a" /></svg>
                <svg width="12" height="12" viewBox="0 0 12 12"><path d="M1 3h8v8H1zM3 1h8v8" fill="#34527c" stroke="#3d6aa8" /></svg>
                <svg width="14" height="12" viewBox="0 0 14 12"><path d="M4 1h9L9 6H0zM4 5h9l-4 5H0z" fill="none" stroke="#4b83d0" /></svg>
                <svg width="12" height="13" viewBox="0 0 12 13"><path d="M2 0h6v5H2z" fill="#e6dc58" /><path d="M0 6h7v5H0z" fill="#5d9ee8" /><path d="M5 7h7l-4 5z" fill="#59c046" /></svg>
                <svg width="13" height="12" viewBox="0 0 13 12"><path d="M1 3h11v8H1zM4 3V0l4 3M7 6h5" fill="none" stroke="#c8622e" strokeWidth="1.300" /></svg>
            </Cell>
            <div className="flex w-[41px] items-center justify-around">
                <svg width="14" height="11" viewBox="0 0 14 11"><path d="M.5.5h13v10H.5z" fill="none" stroke="#ccc" /><path d="M8 5l3-3M8 2h3v3M6 6L3 9M3 6v3h3" fill="none" stroke="#eee" /></svg>
                <Menu size={15} className="text-[#ddd]" />
            </div>
        </div>
    </footer>
);

export default function App() {
    return (
        <div className="relative flex h-screen w-full flex-col overflow-hidden bg-[#363636] font-['Open_Sans',sans-serif]">
            <TitleBar />
            <RibbonTabs />
            <Ribbon />
            <AppButton />
            <FileTabs />
            <main className="flex min-h-0 flex-1">
                <div className="flex w-[322px] shrink-0 flex-col">
                    <div className="flex min-h-0 flex-1 bg-[#595959]">
                        <DockStrip />
                        <div className="flex min-w-0 flex-1 flex-col pt-[3px]"><PropertiesPalette /></div>
                    </div>
                    <LayoutTabs />
                </div>
                <div className="flex min-w-0 flex-1 flex-col">
                    <Canvas />
                    <CommandLine />
                </div>
                <ProjectNavigator />
            </main>
            <StatusBar />
        </div>
    );
}
